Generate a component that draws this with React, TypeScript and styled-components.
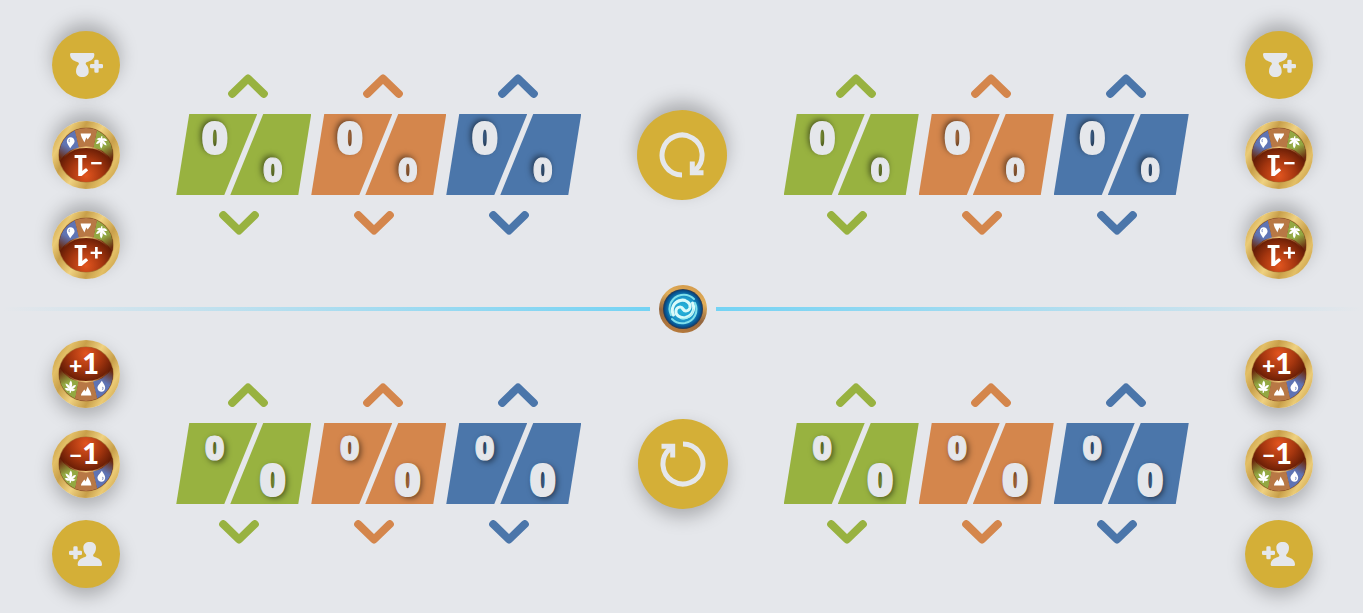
import React, { useState } from "react";
import styled, { createGlobalStyle, css } from "styled-components";

const colors = {
  page: "#e5e7eb",
  gold: "#d4af37",
  forest: "#98b240",
  mountain: "#d4864c",
  water: "#4b76aa",
  line: "#74d3f4",
};

const GlobalStyle = createGlobalStyle`
  *, *::before, *::after { box-sizing: border-box; }
  body {
    margin: 0;
    background: ${colors.page};
    font-family: "Noto Sans", "Open Sans", sans-serif;
  }
`;

const Page = styled.main`
  display: flex;
  flex-direction: column;
  min-height: 100vh;
  padding: 31px 0 25px;
  overflow: hidden;
`;

const PlayerArea = styled.section<{ $flipped?: boolean }>`
  display: flex;
  align-items: center;
  justify-content: space-between;
  padding: 0 50px 0 52px;
  ${(p) =>
    p.$flipped &&
    css`
      padding: 0 52px 0 50px;
      transform: rotate(180deg);
    `}
`;

const ActionColumn = styled.div`
  display: flex;
  flex-direction: column;
  gap: 22px;
`;

const RoundButton = styled.button<{ $size: number; $plain?: boolean }>`
  display: grid;
  place-items: center;
  width: ${(p) => p.$size}px;
  height: ${(p) => p.$size}px;
  padding: 0;
  border: 0;
  border-radius: 50%;
  background: ${(p) => (p.$plain ? "none" : colors.gold)};
  color: ${colors.page};
  box-shadow: 0 8px 18px rgba(0, 0, 0, 0.25);
  cursor: pointer;
`;

const Counters = styled.div<{ $flipped?: boolean }>`
  display: flex;
  ${(p) => (p.$flipped ? "flex-direction: row-reverse; padding-top: 1px;" : "padding-bottom: 1px;")}
`;

const Counter = styled.div<{ $color: string }>`
  display: flex;
  flex-direction: column;
  align-items: center;
  gap: 16px;
  width: 135px;
  color: ${(p) => p.$color};
`;

const StepButton = styled.button<{ $down?: boolean }>`
  display: block;
  width: 40px;
  height: 24px;
  padding: 0;
  border: 0;
  background: none;
  color: inherit;
  cursor: pointer;
  ${(p) => (p.$down ? "margin-right: 9px;" : "margin-left: 9px;")}
  svg {
    display: block;
    ${(p) => p.$down && "transform: rotate(180deg);"}
  }
`;

const Panel = styled.div`
  display: flex;
  width: 135px;
  height: 81px;
`;

const Value = styled.span`
  color: ${colors.page};
  font-weight: 900;
  text-shadow: 2px 2px 6px rgba(0, 0, 0, 0.6);
`;

const ReserveHalf = styled.div`
  display: flex;
  justify-content: center;
  align-items: flex-start;
  width: 81px;
  padding: 11px 4px 0 0;
  background: currentColor;
  clip-path: polygon(13px 0, 81px 0, 48px 100%, 0 100%);
  ${Value} {
    font-size: 34px;
    line-height: 26px;
    -webkit-text-stroke: 1px ${colors.page};
  }
`;

const TotalHalf = styled.div`
  display: flex;
  justify-content: center;
  align-items: flex-end;
  width: 81px;
  margin-left: -27px;
  padding: 0 0 8px 4px;
  background: currentColor;
  clip-path: polygon(33px 0, 81px 0, 68px 100%, 0 100%);
  ${Value} {
    font-size: 45px;
    line-height: 34px;
    -webkit-text-stroke: 2px ${colors.page};
  }
`;

const Divider = styled.div`
  display: flex;
  align-items: center;
  gap: 8px;
  padding: 6px 0 7px 2px;
`;

const Line = styled.div<{ $side: "left" | "right" }>`
  flex: 1;
  height: 4px;
  background: linear-gradient(to ${(p) => p.$side}, ${colors.line}, transparent);
`;

const OrbButton = styled.button`
  width: 50px;
  height: 48px;
  padding: 0;
  border: 0;
  background: none;
  cursor: pointer;
  svg {
    display: block;
    margin: 0 auto;
  }
`;

const Chevron = () => (
  <svg width="40" height="24" viewBox="0 0 40 24" fill="none" aria-hidden="true">
    <path d="M4.200 19.800 20 4.500 35.800 19.800" stroke="currentColor" strokeWidth="8" strokeLinecap="round" strokeLinejoin="round" />
  </svg>
);

const AddPlayerIcon = () => (
  <svg width="34" height="26" viewBox="0 0 102 78" fill="currentColor" aria-hidden="true">
    <rect x="0" y="29" width="39" height="13" rx="4" />
    <rect x="13" y="16" width="13" height="39" rx="4" />
    <path d="M43 20C43 9 51 3 62 3S81 9 81 20C81 30 77 36 74 39C71 43 72 46 77 48C90 52 99 58 99 71Q99 75 95 75H30Q26 75 26 71C26 58 35 52 48 48C53 46 53 43 50 39C47 36 43 30 43 20Z" />
  </svg>
);

const ResetIcon = () => (
  <svg width="46" height="46" viewBox="0 0 46 46" fill="none" stroke="currentColor" strokeWidth="5" aria-hidden="true">
    <path d="M23 3A20 20 0 1 1 9.500 8.200L12.500 6" />
    <path d="M1.500 5.300H12.700V16.500" />
  </svg>
);

const Coin = ({ sign, id }: { sign: string; id: string }) => (
  <svg width="68" height="68" viewBox="0 0 68 68" aria-hidden="true">
    <svg width="68" height="68" viewBox="0 0 202 202">
      <defs>
        <linearGradient id={`${id}-ring`} x1="0" y1="0.2" x2="1" y2="0.8">
          <stop offset="0" stopColor="#c79d47" />
          <stop offset="0.15" stopColor="#e3bf66" />
          <stop offset="0.3" stopColor="#c9a04a" />
          <stop offset="0.5" stopColor="#efd180" />
          <stop offset="0.7" stopColor="#c89f49" />
          <stop offset="0.85" stopColor="#ebcb76" />
          <stop offset="1" stopColor="#cfa54e" />
        </linearGradient>
        <radialGradient id={`${id}-face`} cx="0.5" cy="0.12" r="0.68">
          <stop offset="0" stopColor="#e2551f" />
          <stop offset="0.45" stopColor="#a5360f" />
          <stop offset="0.8" stopColor="#641c05" />
          <stop offset="1" stopColor="#501404" />
        </radialGradient>
        <linearGradient id={`${id}-leaf`} gradientUnits="userSpaceOnUse" x1="30" y1="90" x2="50" y2="124">
          <stop offset="0" stopColor="#6b2a0e" />
          <stop offset="1" stopColor="#93a842" />
        </linearGradient>
        <linearGradient id={`${id}-drop`} gradientUnits="userSpaceOnUse" x1="172" y1="90" x2="152" y2="124">
          <stop offset="0" stopColor="#6b2a0e" />
          <stop offset="1" stopColor="#5f74b4" />
        </linearGradient>
        <linearGradient id={`${id}-fade`}>
          <stop offset="0" stopColor="#eebd68" stopOpacity="0" />
          <stop offset="0.5" stopColor="#f4ce80" />
          <stop offset="1" stopColor="#eebd68" stopOpacity="0" />
        </linearGradient>
        <clipPath id={`${id}-clip`}>
          <circle cx="101" cy="101" r="80" />
        </clipPath>
      </defs>
      <circle cx="101" cy="101" r="101" fill={`url(#${id}-ring)`} />
      <circle cx="101" cy="101" r="82" fill="#a87434" />
      <circle cx="101" cy="101" r="80" fill={`url(#${id}-face)`} />
      <g clipPath={`url(#${id}-clip)`}>
        <path d="M20 80Q50 122 80 122L66 190H0V80Z" fill={`url(#${id}-leaf)`} />
        <path d="M182 80Q152 122 121 122L137 190H202V80Z" fill={`url(#${id}-drop)`} />
        <path d="M79 122Q101 127 122 122L138 190H65Z" fill="#b87845" />
      </g>
      <path d="M34 94Q61 124 101 124T168 94" fill="none" stroke={`url(#${id}-fade)`} strokeWidth="4" />
      <g fill="#fff">
        <path d="M52 157C53 153 53 151 51 150C47 152 42 150 38 144C43 142 47 142 51 145C45 141 41 136 40 129C47 130 51 134 53 139C50 132 51 126 56 120C61 127 61 134 58 141C61 136 65 133 71 134C70 140 66 144 60 146C64 145 68 146 70 148C66 152 61 153 57 151Q57 154 56 157Z" />
        <path d="M86 165C86 158 92 154 96 147L100 153L106 138C109 146 116 152 117 165Z" />
        <path fillRule="evenodd" d="M148 121C153 129 158 135 158 142C158 149 153 154 147 154S135 149 135 142C135 135 143 130 148 121ZM149 139Q153 143 148 149Q154 147 153 142Q152 139 149 139Z" />
      </g>
    </svg>
    <text x="17" y="34" fill="#fff" fontFamily="Lato, sans-serif" fontWeight="900" fontSize="23">
      {sign}
      <tspan fontSize="29">1</tspan>
    </text>
  </svg>
);

const swirlArm = (
  <>
    <path d="M48 48C45 42 36 43 34 51C32 60 42 67 53 65C67 62 73 48 67 36" strokeWidth="6" stroke="#d8fafa" />
    <path d="M24 60C16 43 25 24 44 20C55 18 64 22 70 28" strokeWidth="4" stroke="#7fe0ec" />
    <path d="M27 47C29 34 40 27 52 29" strokeWidth="3" stroke="#a8eef2" />
  </>
);

const Orb = () => (
  <svg width="48" height="48" viewBox="0 0 96 96" fill="none" aria-hidden="true">
    <defs>
      <linearGradient id="orb-ring" x1="0.7" y1="0" x2="0.4" y2="1">
        <stop offset="0" stopColor="#d39a4b" />
        <stop offset="0.3" stopColor="#e1ae59" />
        <stop offset="0.65" stopColor="#93663f" />
        <stop offset="1" stopColor="#b87b3b" />
      </linearGradient>
      <radialGradient id="orb-core">
        <stop offset="0" stopColor="#28b8dd" />
        <stop offset="0.65" stopColor="#1c96c8" />
        <stop offset="0.85" stopColor="#0a66a3" />
        <stop offset="1" stopColor="#07457f" />
      </radialGradient>
    </defs>
    <circle cx="48" cy="48" r="48" fill="url(#orb-ring)" />
    <circle cx="48" cy="48" r="40" fill="#293e58" />
    <circle cx="48" cy="48" r="38" fill="url(#orb-core)" />
    <g strokeLinecap="round">
      <g>{swirlArm}</g>
      <g transform="rotate(180 48 48)">{swirlArm}</g>
    </g>
  </svg>
);

const regions = [
  { name: "Forest", color: colors.forest },
  { name: "Mountain", color: colors.mountain },
  { name: "Water", color: colors.water },
];

const ExpeditionCounters = ({ label, flipped }: { label: string; flipped?: boolean }) => {
  const [values, setValues] = useState([0, 0, 0]);
  const step = (index: number, by: number) =>
    setValues((all) => all.map((v, i) => (i === index ? Math.max(0, v + by) : v)));

  return (
    <Counters $flipped={flipped} role="group" aria-label={label}>
      {regions.map((region, i) => (
        <Counter key={region.name} $color={region.color}>
          <StepButton type="button" aria-label={`Increase ${region.name}`} onClick={() => step(i, 1)}>
            <Chevron />
          </StepButton>
          <Panel>
            <ReserveHalf>
              <Value>0</Value>
            </ReserveHalf>
            <TotalHalf>
              <Value>{values[i]}</Value>
            </TotalHalf>
          </Panel>
          <StepButton $down type="button" aria-label={`Decrease ${region.name}`} onClick={() => step(i, -1)}>
            <Chevron />
          </StepButton>
        </Counter>
      ))}
    </Counters>
  );
};

const Actions = ({ id }: { id: string }) => (
  <ActionColumn>
    <RoundButton $size={68} $plain type="button" aria-label="Add one to all">
      <Coin sign="+" id={`${id}-plus`} />
    </RoundButton>
    <RoundButton $size={68} $plain type="button" aria-label="Remove one from all">
      <Coin sign="−" id={`${id}-minus`} />
    </RoundButton>
    <RoundButton $size={68} type="button" aria-label="Add player">
      <AddPlayerIcon />
    </RoundButton>
  </ActionColumn>
);

const Player = ({ id, flipped }: { id: string; flipped?: boolean }) => (
  <PlayerArea $flipped={flipped}>
    <Actions id={`${id}-left`} />
    <ExpeditionCounters label="Left expedition" flipped={flipped} />
    <RoundButton $size={90} type="button" aria-label="Reset">
      <ResetIcon />
    </RoundButton>
    <ExpeditionCounters label="Right expedition" flipped={flipped} />
    <Actions id={`${id}-right`} />
  </PlayerArea>
);

export default function App() {
  return (
    <>
      <GlobalStyle />
      <Page>
        <Player id="top" flipped />
        <Divider>
          <Line $side="left" />
          <OrbButton type="button" aria-label="Menu">
            <Orb />
          </OrbButton>
          <Line $side="right" />
        </Divider>
        <Player id="bottom" />
      </Page>
    </>
  );
}
